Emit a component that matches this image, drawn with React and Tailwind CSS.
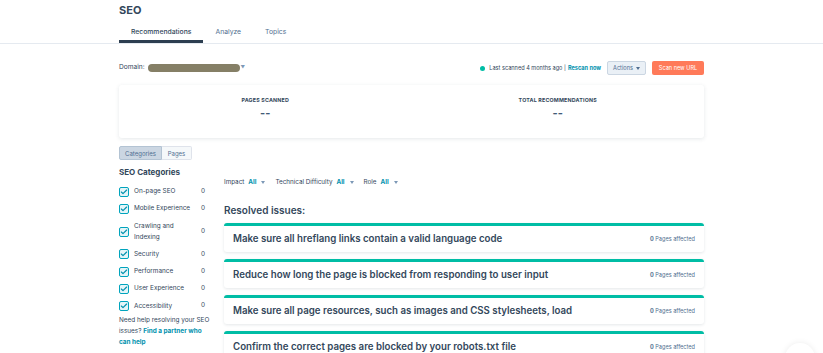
import { Check } from "lucide-react";

const categories = [
  { name: "On-page SEO", count: 0 },
  { name: "Mobile Experience", count: 0 },
  { name: "Crawling and Indexing", count: 0 },
  { name: "Security", count: 0 },
  { name: "Performance", count: 0 },
  { name: "User Experience", count: 0 },
  { name: "Accessibility", count: 0 },
];

const issues = [
  "Make sure all hreflang links contain a valid language code",
  "Reduce how long the page is blocked from responding to user input",
  "Make sure all page resources, such as images and CSS stylesheets, load",
  "Confirm the correct pages are blocked by your robots.txt file",
];

function Caret() {
  return <span className="inline-block ml-[3px] align-middle border-x-[2.5px] border-t-[3px] border-x-transparent border-t-current" />;
}

function Filter({ label, value }) {
  return (
    <div className="flex items-center gap-[4px]">
      <span className="text-[#33475b]">{label}</span>
      <span className="font-bold text-[#0091ae]">{value}</span>
      <span className="text-[#7c98b6] -ml-[2px]">
        <Caret />
      </span>
    </div>
  );
}

export default function App() {
  return (
    <div className="w-[823px] h-[353px] overflow-hidden bg-white text-[#33475b] relative" style={{ fontFamily: "Inter, 'Noto Sans', sans-serif" }}>
      {/* header */}
      <div className="border-b border-[#e5eaf0]">
        <div className="pl-[119px] pt-[3px]">
          <div className="text-[11px] font-bold leading-[15px]">SEO</div>
          <div className="flex mt-[5px] text-[6.8px] leading-[10px]">
            <div className="px-[12px] pt-[4px] pb-[3px] border-b-[3px] border-[#2d3e50] font-medium">Recommendations</div>
            <div className="px-[12px] pt-[4px] pb-[3px] border-b-[3px] border-transparent text-[#516f90]">Analyze</div>
            <div className="px-[12px] pt-[4px] pb-[3px] border-b-[3px] border-transparent text-[#516f90]">Topics</div>
          </div>
        </div>
      </div>

      <div className="ml-[119px] w-[585px]">
        {/* domain row */}
        <div className="flex items-center justify-between mt-[17px] h-[14px]">
          <div className="flex items-center text-[6.6px]">
            <span>Domain:</span>
            <span className="ml-[3px] w-[92px] h-[8px] rounded-full bg-[#857f66]" />
            <span className="text-[#7c98b6] text-[4.5px] ml-[1px]">▼</span>
          </div>
          <div className="flex items-center text-[5.6px]">
            <span className="w-[5px] h-[5px] rounded-full bg-[#00bda5] mr-[4px]" />
            <span>Last scanned 4 months ago |</span>
            <span className="ml-[2px] font-bold text-[#0091ae]">Rescan now</span>
            <div className="ml-[6px] h-[14px] w-[39px] rounded-[2px] border border-[#cbd6e2] bg-[#eaf0f6] flex items-center justify-center text-[#506e91]">
              Actions
              <Caret />
            </div>
            <div className="ml-[6px] h-[14px] w-[52px] rounded-[2px] bg-[#ff7a59] flex items-center justify-center text-white">Scan new URL</div>
          </div>
        </div>

        {/* stats card */}
        <div className="mt-[10px] h-[53px] rounded-[3px] bg-white shadow-[0_1px_4px_rgba(45,62,80,0.12)] grid grid-cols-2 pt-[12px]">
          <div className="flex flex-col items-center">
            <div className="text-[5.3px] font-bold tracking-[0.2px] text-[#33475b]">PAGES SCANNED</div>
            <div className="text-[11px] leading-[14px] font-bold mt-[1px] text-[#425b76]">--</div>
          </div>
          <div className="flex flex-col items-center">
            <div className="text-[5.3px] font-bold tracking-[0.2px] text-[#33475b]">TOTAL RECOMMENDATIONS</div>
            <div className="text-[11px] leading-[14px] font-bold mt-[1px] text-[#425b76]">--</div>
          </div>
        </div>

        {/* toggle */}
        <div className="mt-[8px] flex text-[6px] h-[14px]">
          <div className="w-[43px] flex items-center justify-center bg-[#cbd6e2] border border-[#b3c3d3] rounded-l-[2px] text-[#506e91]">Categories</div>
          <div className="w-[30px] flex items-center justify-center bg-[#f5f8fa] border border-l-0 border-[#dfe3eb] rounded-r-[2px] text-[#506e91]">Pages</div>
        </div>

        <div className="flex mt-[6px]">
          {/* sidebar */}
          <div className="w-[94px] shrink-0">
            <div className="text-[8px] font-bold leading-[12px]">SEO Categories</div>
            <div className="mt-[8px] flex flex-col gap-[6.3px]">
              {categories.map((c) => (
                <div key={c.name} className="flex items-center text-[6.4px]">
                  <span className="w-[10px] h-[10px] shrink-0 rounded-[2px] border border-[#00a4bd] bg-[#e5f5f8] flex items-center justify-center">
                    <Check size={8} strokeWidth={3.5} className="text-[#0091ae]" />
                  </span>
                  <span className="ml-[5px] w-[60px] leading-[11px]">{c.name}</span>
                  <span className="ml-auto mr-[8px]">{c.count}</span>
                </div>
              ))}
            </div>
            <p className="mt-[3px] text-[6.4px] leading-[11px] w-[94px]">
              Need help resolving your SEO issues? <span className="font-bold text-[#0091ae]">Find a partner who can help</span>
            </p>
          </div>

          {/* main */}
          <div className="ml-[11px] flex-1">
            <div className="flex items-center gap-[10px] text-[6.3px] leading-[10px] mt-[11px]">
              <Filter label="Impact" value="All" />
              <Filter label="Technical Difficulty" value="All" />
              <Filter label="Role" value="All" />
            </div>
            <div className="mt-[15px] text-[10px] font-semibold leading-[16px]">Resolved issues:</div>
            <div className="mt-[5px] flex flex-col gap-[7px]">
              {issues.map((t) => (
                <div key={t} className="h-[29px] rounded-[3px] border-t-[3px] border-[#00bda5] bg-white shadow-[0_1px_3px_rgba(45,62,80,0.12)] flex items-center justify-between pl-[9px] pr-[9px]">
                  <span className="text-[9.7px] font-semibold">{t}</span>
                  <span className="text-[5.6px] text-[#516f90]">
                    <span className="font-bold">0</span> Pages affected
                  </span>
                </div>
              ))}
            </div>
          </div>
        </div>
      </div>
      <div className="absolute right-[8px] bottom-[-20px] w-[30px] h-[30px] rounded-full bg-white shadow-[0_0_6px_rgba(0,0,0,0.08)]" />
    </div>
  );
}
